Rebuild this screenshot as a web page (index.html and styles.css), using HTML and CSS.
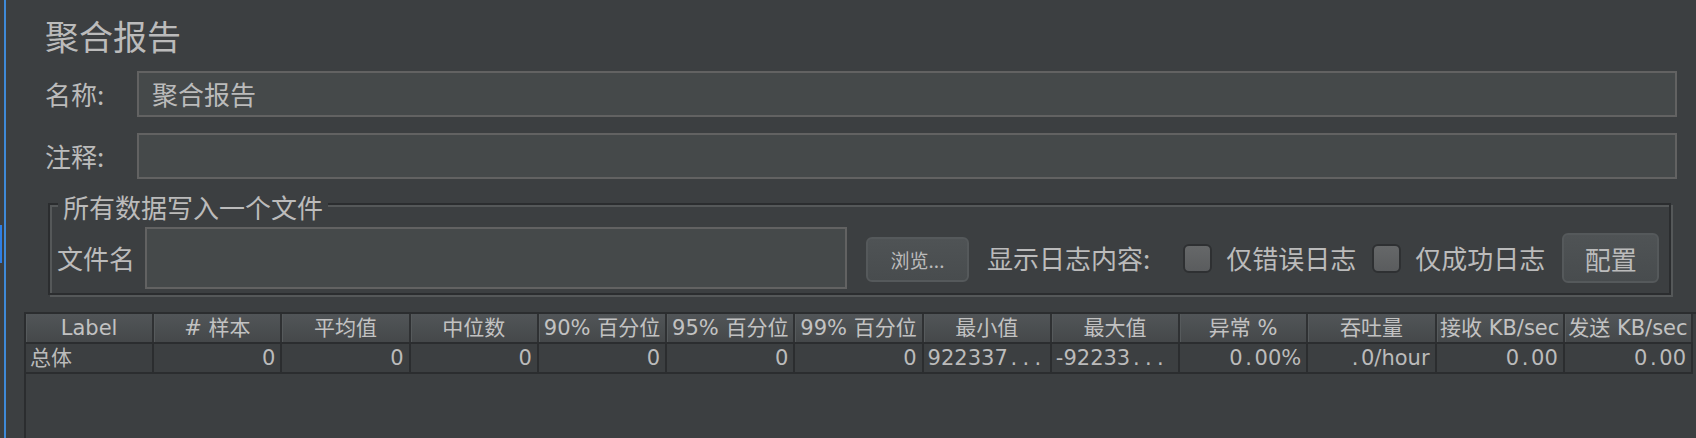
FILE: index.html
```html
<!DOCTYPE html>
<html lang="zh">
<head>
<meta charset="utf-8">
<title>聚合报告</title>
<link rel="stylesheet" href="styles.css">
</head>
<body>
<div class="app">
  <div class="rail"><div class="rail-mark"></div></div>
  <div class="main">
    <div class="form">
      <h1 class="title">聚合报告</h1>
      <div class="row">
        <span class="lbl">名称:</span>
        <div class="field">聚合报告</div>
      </div>
      <div class="row row-2">
        <span class="lbl">注释:</span>
        <div class="field"></div>
      </div>
      <div class="group">
        <span class="group-title">所有数据写入一个文件</span>
        <div class="group-row">
          <span class="file-lbl">文件名</span>
          <div class="file-field"></div>
          <div class="btn btn-browse">浏览...</div>
          <span class="show-lbl">显示日志内容:</span>
          <span class="check check-1"></span>
          <span class="chk-text">仅错误日志</span>
          <span class="check check-2"></span>
          <span class="chk-text">仅成功日志</span>
          <div class="btn btn-config">配置</div>
        </div>
      </div>
    </div>
    <div class="tbl">
      <div class="thead">
        <div class="th">Label</div>
        <div class="th"># 样本</div>
        <div class="th">平均值</div>
        <div class="th">中位数</div>
        <div class="th">90% 百分位</div>
        <div class="th">95% 百分位</div>
        <div class="th">99% 百分位</div>
        <div class="th">最小值</div>
        <div class="th">最大值</div>
        <div class="th">异常 %</div>
        <div class="th">吞吐量</div>
        <div class="th">接收 KB/sec</div>
        <div class="th">发送 KB/sec</div>
      </div>
      <div class="trow">
        <div class="td td-left">总体</div>
        <div class="td">0</div>
        <div class="td">0</div>
        <div class="td">0</div>
        <div class="td">0</div>
        <div class="td">0</div>
        <div class="td">0</div>
        <div class="td td-left">922337<span class="dot">.</span><span class="dot">.</span><span class="dot">.</span></div>
        <div class="td td-left">-92233<span class="dot">.</span><span class="dot">.</span><span class="dot">.</span></div>
        <div class="td">0<span class="dot">.</span>00%</div>
        <div class="td"><span class="dot">.</span>0/hour</div>
        <div class="td">0<span class="dot">.</span>00</div>
        <div class="td">0<span class="dot">.</span>00</div>
      </div>
    </div>
  </div>
</div>
</body>
</html>
```
FILE: styles.css
```css
* { box-sizing: border-box; }

html, body {
  margin: 0;
  padding: 0;
  height: 100%;
  overflow: hidden;
}

body {
  background: #3c3f41;
  color: #bbbbbb;
  font-family: "Noto Sans CJK SC", "Noto Sans", sans-serif;
}

.app {
  display: flex;
  height: 438px;
}

.rail {
  width: 4px;
  flex: none;
  padding-top: 225px;
}

.rail-mark {
  width: 2px;
  height: 38px;
  background: #2f7fe4;
}

.main {
  flex: 1;
  min-width: 0;
  border-left: 2px solid #3f8ad8;
  overflow: hidden;
}

.form {
  padding: 19px 19px 0 39px;
}

.title {
  margin: 0;
  font-size: 34px;
  line-height: 33px;
  font-weight: normal;
}

.row {
  display: flex;
  align-items: center;
  margin-top: 19px;
}

.row-2 { margin-top: 16px; }

.lbl {
  width: 92px;
  flex: none;
  font-size: 26px;
  line-height: 26px;
}

.field {
  flex: 1;
  height: 46px;
  border: 2px solid #626262;
  background: #45494a;
  font-size: 26px;
  line-height: 42px;
  padding-left: 13px;
}

.group {
  position: relative;
  margin: 24px 6px 0 3px;
  border: 2px solid #2b2d2f;
  box-shadow: inset 2px 2px 0 #555859, 2px 2px 0 #555859;
  padding: 22px 8px 4px 7px;
}

.group-title {
  position: absolute;
  left: 8px;
  top: -11px;
  padding: 0 5px;
  background: #3c3f41;
  font-size: 26px;
  line-height: 26px;
}

.group-row {
  display: flex;
  align-items: center;
  height: 62px;
}

.file-lbl {
  width: 88px;
  flex: none;
  font-size: 26px;
  line-height: 26px;
}

.file-field {
  width: 702px;
  flex: none;
  height: 62px;
  border: 2px solid #626262;
  background: #45494a;
}

.btn {
  flex: none;
  display: flex;
  align-items: center;
  justify-content: center;
  border: 2px solid #55595b;
  border-radius: 6px;
  background: linear-gradient(#4f5355, #484c4e);
  color: #bbbbbb;
}

.btn-browse {
  margin-left: 19px;
  margin-top: 3px;
  width: 103px;
  height: 45px;
  font-size: 19px;
}

.btn-config {
  margin-left: 17px;
  width: 97px;
  height: 50px;
  font-size: 26px;
}

.show-lbl {
  margin-left: 18px;
  font-size: 26px;
  line-height: 26px;
  flex: none;
}

.check {
  flex: none;
  width: 29px;
  height: 29px;
  border: 2px solid #2e3032;
  border-radius: 6px;
  background: linear-gradient(#666869, #5a5c5e);
}

.check-1 { margin-left: 33px; }
.check-2 { margin-left: 16px; }

.chk-text {
  margin-left: 14px;
  font-size: 26px;
  line-height: 26px;
  flex: none;
}

.tbl {
  margin: 17px 0 0 18px;
  border-top: 2px solid #2b2d2f;
  border-left: 2px solid #2b2d2f;
  height: 140px;
  font-family: "DejaVu Sans", "Noto Sans CJK SC", sans-serif;
  font-size: 21px;
}

.thead,
.trow {
  display: grid;
  grid-template-columns: repeat(13, 1fr);
  width: 1667px;
}

.thead {
  height: 30px;
  background: linear-gradient(#515558, #45484a);
  border-bottom: 2px solid #2b2d2f;
}

.th {
  text-align: center;
  line-height: 28px;
  white-space: nowrap;
  overflow: hidden;
  border-right: 2px solid #2f3133;
  box-shadow: inset 1px 0 0 #565a5c;
  color: #c2c2c2;
}

.trow {
  height: 30px;
  border-bottom: 2px solid #2b2d2f;
}

.td {
  text-align: right;
  line-height: 28px;
  white-space: nowrap;
  overflow: hidden;
  padding: 0 5px 0 4px;
  border-right: 2px solid #2b2d2f;
}

.td-left {
  text-align: left;
}

.dot {
  display: inline-block;
  width: 12px;
  text-align: center;
}
```
